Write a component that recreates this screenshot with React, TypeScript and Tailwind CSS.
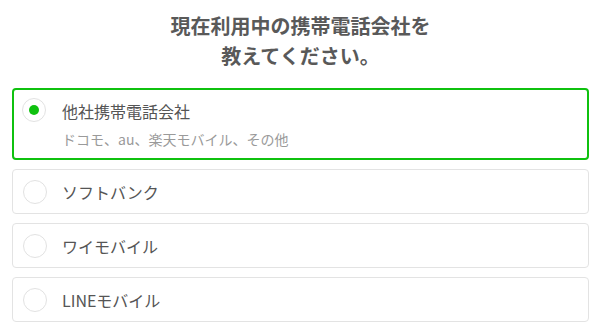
import React from "react";

const font = { fontFamily: '"Noto Sans CJK JP", "Noto Sans", sans-serif' };

function Radio({ checked }: { checked?: boolean }) {
  return (
    <div className="w-[24px] h-[24px] shrink-0 rounded-full border border-[#e2e2e2] bg-white flex items-center justify-center">
      {checked && <div className="w-[10px] h-[10px] rounded-full bg-[#0fc10f]" />}
    </div>
  );
}

function Option({ label }: { label: string }) {
  return (
    <div className="h-[45px] rounded-[4px] border border-[#e3e3e3] bg-white flex items-center pl-[10px]">
      <Radio />
      <span className="ml-[15px] text-[16px] leading-[24px] text-[#555555]">{label}</span>
    </div>
  );
}

export default function App() {
  return (
    <div className="w-[601px] h-[334px] bg-white px-3 pt-[11px]" style={font}>
      <h1 className="text-center text-[20px] leading-[30px] font-bold text-[#595959]">
        現在利用中の携帯電話会社を
        <br />
        教えてください。
      </h1>
      <div className="mt-[17px] flex flex-col gap-[9px]">
        <div className="h-[72px] rounded-[4px] border-2 border-[#0fc10f] bg-white flex items-start pl-[8px] pt-[8px]">
          <Radio checked />
          <div className="ml-[16px] pt-[1px] flex flex-col">
            <span className="text-[16px] leading-[24px] text-[#555555]">他社携帯電話会社</span>
            <span className="mt-[6px] text-[14px] leading-[20px] text-[#9a9a9a]">
              ドコモ、au、楽天モバイル、その他
            </span>
          </div>
        </div>
        <Option label="ソフトバンク" />
        <Option label="ワイモバイル" />
        <Option label="LINEモバイル" />
      </div>
    </div>
  );
}
